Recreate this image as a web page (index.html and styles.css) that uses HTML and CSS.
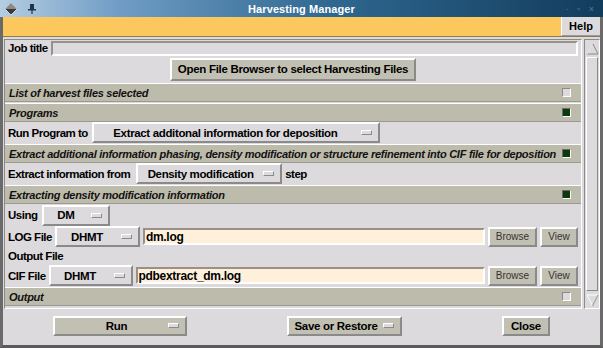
FILE: index.html
```html
<!DOCTYPE html>
<html lang="en">
<head>
  <meta charset="UTF-8">
  <title>Harvesting Manager</title>
  <link rel="stylesheet" href="styles.css">
</head>
<body>
  <div class="window">
    <div class="titlebar">
      <span class="tb-icon">
        <svg width="14" height="14" viewBox="0 0 14 14"><polygon points="7,1 13,7 7,13 1,7" fill="#3a3a3a" stroke="#eee" stroke-width="0.8"/><polygon points="7,1 13,7 1,7" fill="#8a8a8a"/></svg>
      </span>
      <span class="tb-pin">
        <svg width="8" height="12" viewBox="0 0 8 12"><rect x="2" y="1" width="4" height="5" fill="#234"/><rect x="0" y="6" width="8" height="1.5" fill="#234"/><rect x="3.4" y="7" width="1.2" height="4" fill="#234"/></svg>
      </span>
      <span class="tb-title">Harvesting Manager</span>
      <span class="tb-ctrls">&middot; &#9643; &#215;</span>
    </div>
    <div class="menubar">
      <div class="help">Help</div>
    </div>
    <div class="main">
      <div class="content">
        <div class="row job-row">
          <span class="label">Job title</span>
          <div class="entry grey"></div>
        </div>
        <div class="row open-row">
          <div class="btn big">Open File Browser to select Harvesting Files</div>
        </div>
        <div class="section"><span>List of harvest files selected</span><i class="check"></i></div>
        <div class="section"><span>Programs</span><i class="check on"></i></div>
        <div class="row">
          <span class="label">Run Program to</span>
          <div class="menu run-prog"><span>Extract additonal information for deposition</span><i class="ind"></i></div>
        </div>
        <div class="section"><span>Extract additional information phasing, density modification or structure refinement into CIF file for deposition</span><i class="check on"></i></div>
        <div class="row">
          <span class="label">Extract information from</span>
          <div class="menu density"><span>Density modification</span><i class="ind"></i></div>
          <span class="label">step</span>
        </div>
        <div class="section"><span>Extracting density modification information</span><i class="check on"></i></div>
        <div class="row using-row">
          <span class="label">Using</span>
          <div class="menu using"><span>DM</span><i class="ind"></i></div>
        </div>
        <div class="row file-row">
          <span class="label">LOG File</span>
          <div class="menu file-kind log"><span>DHMT</span><i class="ind"></i></div>
          <div class="entry peach">dm.log</div>
          <div class="btn small browse">Browse</div>
          <div class="btn small view">View</div>
        </div>
        <div class="row plain">
          <span class="label">Output File</span>
        </div>
        <div class="row file-row">
          <span class="label">CIF File</span>
          <div class="menu file-kind cif"><span>DHMT</span><i class="ind"></i></div>
          <div class="entry peach">pdbextract_dm.log</div>
          <div class="btn small browse">Browse</div>
          <div class="btn small view">View</div>
        </div>
        <div class="section"><span>Output</span><i class="check"></i></div>
      </div>
      <div class="scrollbar">
        <div class="arrow up"><svg width="13" height="13" viewBox="0 0 13 13"><polygon points="6.5,1 12,12 1,12" fill="none" stroke="#8a8a8a"/><line x1="6.5" y1="1" x2="1" y2="12" stroke="#fff"/></svg></div>
        <div class="trough"><div class="slider"></div></div>
        <div class="arrow down"><svg width="13" height="13" viewBox="0 0 13 13"><polygon points="1,1 12,1 6.5,12" fill="none" stroke="#fff"/><line x1="12" y1="1" x2="6.5" y2="12" stroke="#8a8a8a"/></svg></div>
      </div>
    </div>
    <div class="footer">
      <div class="btn khaki menu-btn run"><span>Run</span><i class="ind"></i></div>
      <div class="btn khaki menu-btn save"><span>Save or Restore</span><i class="ind"></i></div>
      <div class="btn khaki close">Close</div>
    </div>
  </div>
</body>
</html>
```

FILE: styles.css
```css
body {
  margin: 0;
  background: #dcdadc;
  font-family: 'Liberation Sans', Arial, sans-serif;
  color: #000;
}
.window {
  width: 603px;
  height: 348px;
  box-sizing: border-box;
  border-left: 3px solid #6a6a6a;
  border-right: 3px solid #6a6a6a;
  border-bottom: 3px solid #5a5a5a;
  background: #dcdadc;
  display: flex;
  flex-direction: column;
}
.titlebar {
  height: 17px;
  margin: 0 -3px;
  background: linear-gradient(to right, #b4cde2 0%, #6f9cc4 20%, #2f6790 55%, #123c5c 100%);
  display: flex;
  align-items: center;
  position: relative;
  color: #fff;
}
.tb-icon { margin-left: 4px; display: flex; }
.tb-pin { margin-left: 10px; display: flex; }
.tb-title {
  position: absolute;
  left: 0; right: 0;
  text-align: center;
  font-weight: bold;
  font-size: 11px;
  letter-spacing: 0.1px;
}
.tb-ctrls {
  margin-left: auto;
  margin-right: 6px;
  font-size: 9px;
  color: #5a7a94;
  letter-spacing: 3px;
}
.menubar {
  height: 19px;
  background: #fcc75c;
  border-bottom: 1px solid #8c7a50;
  display: flex;
  justify-content: flex-end;
}
.help {
  width: 38px;
  background: #dcdadc;
  border-left: 1px solid #fff;
  border-bottom: 1px solid #9a9a9a;
  font-weight: bold;
  font-size: 11px;
  display: flex;
  align-items: center;
  justify-content: center;
}
.main {
  display: flex;
  height: 270px;
  padding-top: 2px;
}
.content {
  width: 578px;
  margin-left: 1px;
  border: 1px solid #fff;
  border-top-color: #8a8a8a;
  border-left-color: #8a8a8a;
  box-sizing: border-box;
}
.row {
  display: flex;
  align-items: center;
  height: 21px;
  padding-left: 3px;
  padding-right: 3px;
  gap: 3px;
}
.row.plain { height: 18px; }
.using-row { height: 22px; }
.label {
  font-weight: bold;
  font-size: 11.5px;
  letter-spacing: -0.5px;
  white-space: nowrap;
}
.job-row { height: 16px; gap: 3px; }
.entry {
  height: 17px;
  box-sizing: border-box;
  border: 2px solid;
  border-color: #9a9088 #fff #fff #9a9088;
  font-size: 12px;
  font-weight: bold;
  letter-spacing: -0.3px;
  padding-left: 1px;
  display: flex;
  align-items: center;
}
.entry.grey { flex: 1; background: #dcdadc; height: 15px; }
.entry.peach { flex: 1; background: #fff0dc; }
.open-row { justify-content: center; height: 26px; padding-left: 0; padding-right: 0; }
.btn {
  box-sizing: border-box;
  border: 2px solid;
  border-color: #fff #8a8a8a #8a8a8a #fff;
  display: flex;
  align-items: center;
  justify-content: center;
  white-space: nowrap;
}
.btn.big {
  height: 23px;
  width: 246px;
  background: #c2c0b2;
  font-weight: bold;
  font-size: 11.5px;
  letter-spacing: -0.3px;
}
.btn.small {
  height: 20px;
  background: #c2c0b2;
  font-size: 10px;
  color: #333;
}
.btn.browse { width: 49px; }
.btn.view { width: 38px; }
.section {
  height: 19px;
  margin-top: 1px;
  background: #bdbbab;
  border-top: 1px solid #fff;
  border-bottom: 1px solid #9a9a90;
  display: flex;
  align-items: center;
  padding-left: 4px;
  padding-right: 10px;
  box-sizing: border-box;
  font-style: italic;
  font-weight: bold;
  font-size: 11px;
  letter-spacing: -0.27px;
  color: #111;
}
.section span { flex: 1; white-space: nowrap; }
.check {
  width: 7px;
  height: 7px;
  background: #dcdadc;
  border: 1px solid;
  border-color: #8a8a8a #fff #fff #8a8a8a;
}
.check.on { background: #0b3a0b; border-color: #6a6a6a #fff #fff #6a6a6a; }
.menu {
  height: 21px;
  box-sizing: border-box;
  background: #dcdadc;
  border: 2px solid;
  border-color: #fff #8a8a8a #8a8a8a #fff;
  display: flex;
  align-items: center;
  font-weight: bold;
  font-size: 11.5px;
  letter-spacing: -0.35px;
  white-space: nowrap;
}
.menu span { flex: 1; text-align: center; }
.ind {
  width: 9px;
  height: 3px;
  background: #dcdadc;
  border: 1px solid;
  border-color: #fff #8a8a8a #8a8a8a #fff;
  margin-right: 6px;
  margin-left: 4px;
}
.run-prog { width: 288px; margin-left: 1px; }
.density { width: 146px; margin-left: 3px; }
.density span { padding-left: 4px; }
.using { width: 68px; margin-left: 2px; }
.file-kind.log { width: 85px; }
.file-kind.cif { width: 84px; }
.scrollbar {
  width: 16px;
  margin-left: 2px;
  display: flex;
  flex-direction: column;
  border: 1px solid #8a8a8a;
  border-right-color: #fff;
  border-bottom-color: #fff;
  box-sizing: border-box;
}
.arrow { height: 16px; display: flex; align-items: center; justify-content: center; }
.trough { flex: 1; padding: 1px 1px; display: flex; }
.slider {
  flex: 1;
  background: #dcdadc;
  border: 1px solid;
  border-color: #fff #8a8a8a #8a8a8a #fff;
}
.footer {
  flex: 1;
  display: flex;
  align-items: center;
  gap: 100px;
  padding-left: 50px;
  padding-bottom: 3px;
}
.btn.khaki {
  height: 20px;
  background: #c2c0b2;
  font-weight: bold;
  font-size: 11.5px;
  letter-spacing: -0.3px;
}
.menu-btn span { flex: 1; text-align: center; padding-left: 14px; }
.menu-btn .ind { background: #dcdadc; }
.run { width: 134px; }
.save { width: 115px; }
.save span { padding-left: 4px; }
.close { width: 48px; }
```
